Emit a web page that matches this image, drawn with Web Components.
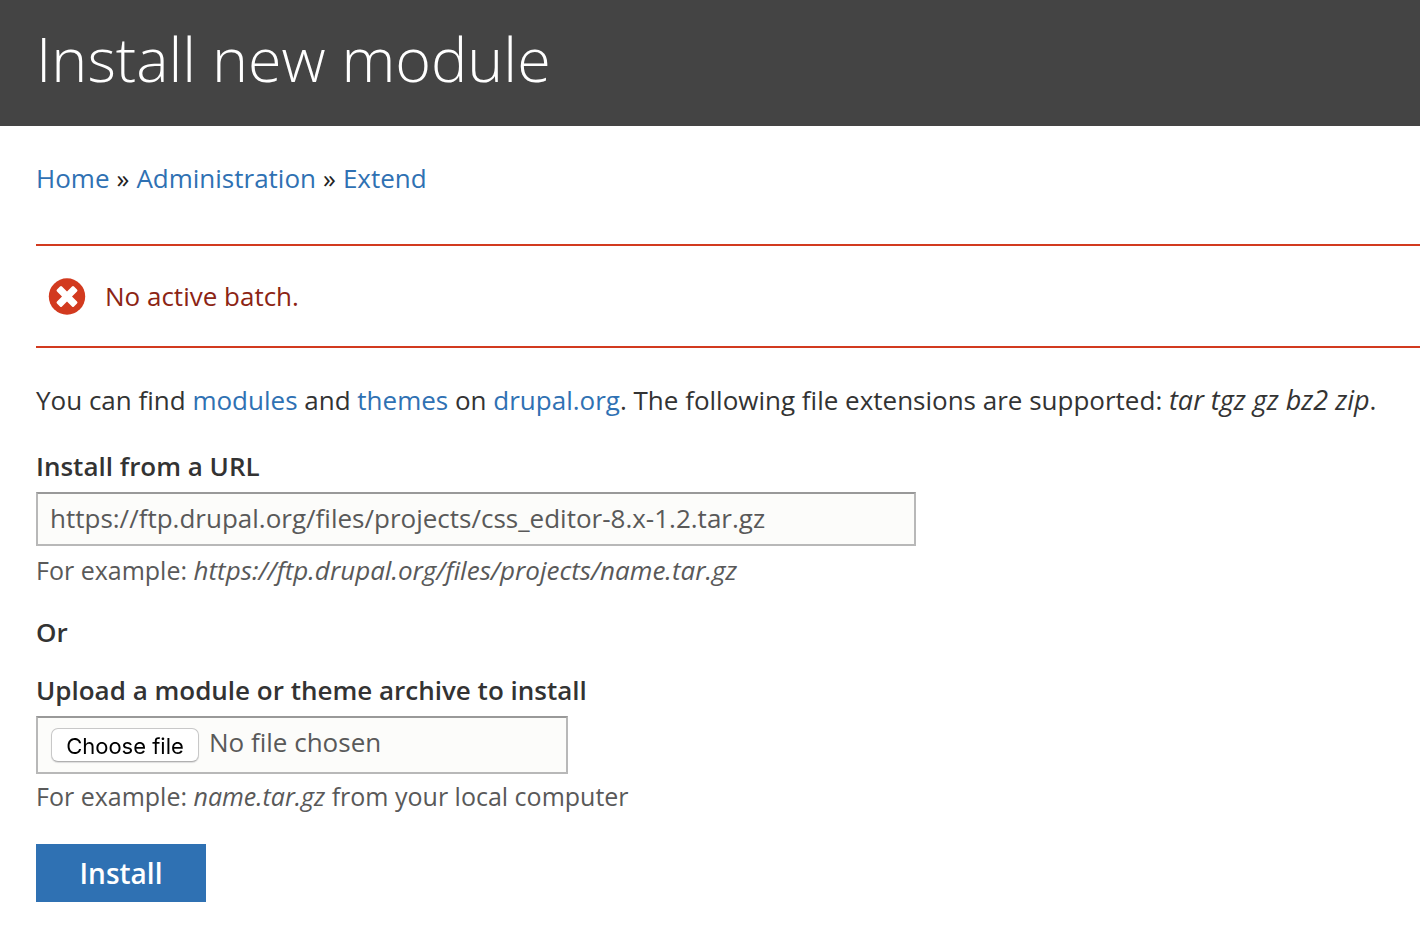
<!DOCTYPE html>
<html lang="en">
<head>
<meta charset="utf-8">
<meta name="viewport" content="width=device-width, initial-scale=1">
<title>Install new module</title>
<style>
  body {
    margin: 0;
    background: #fff;
    color: #333;
    font: 26px/36px "Open Sans", "Noto Sans", sans-serif;
    --link: #2f71b3;
    --muted: #595959;
    --field: #fcfcfa;
    --edge: #b8b8b8;
    --edge-top: #999;
  }
</style>
</head>
<body>
<install-page></install-page>

<script>
const define = (name, html, setup) => {
  const template = document.createElement('template');
  template.innerHTML = html;
  customElements.define(name, class extends HTMLElement {
    constructor() {
      super();
      this.attachShadow({ mode: 'open' }).append(template.content.cloneNode(true));
    }
    connectedCallback() {
      if (setup) setup(this, this.shadowRoot);
    }
  });
};

define('page-header', `
  <style>
    :host { display: block; background: #444; color: #fff; padding: 17px 36px 25px; }
    h1 { margin: 0; font-size: 61px; line-height: 84px; font-weight: 300; }
  </style>
  <header><h1><slot></slot></h1></header>`);

define('bread-crumb', `
  <style>
    :host { display: block; }
    ol { display: flex; flex-wrap: wrap; margin: 0; padding: 0; list-style: none; }
    li + li::before { content: "\\00bb"; margin: 0 7px; color: #222; }
    a { color: var(--link); text-decoration: none; }
  </style>
  <nav aria-label="Breadcrumb"><ol>
    <li><a href="#home">Home</a></li>
    <li><a href="#admin">Administration</a></li>
    <li><a href="#extend">Extend</a></li>
  </ol></nav>`);

define('error-message', `
  <style>
    :host {
      display: flex; align-items: center; gap: 20px;
      padding: 32px 13px;
      border: solid #d23a1f; border-width: 2px 0;
      color: #8c2414;
    }
    svg { width: 36px; height: 36px; flex: none; overflow: visible; }
  </style>
  <svg viewBox="0 0 36 36" aria-hidden="true">
    <circle cx="18" cy="18.500" r="18.200" fill="#d23a1f"/>
    <path d="M8 11.500 L11 8.500 Q12 7.500 13 8.500 L18 13.500 L23 8.500 Q24 7.500 25 8.500 L28 11.500 Q29 12.500 28 13.500 L23 18.500 L28 23.500 Q29 24.500 28 25.500 L25 28.500 Q24 29.500 23 28.500 L18 23.500 L13 28.500 Q12 29.500 11 28.500 L8 25.500 Q7 24.500 8 23.500 L13 18.500 L8 13.500 Q7 12.500 8 11.500 Z" fill="#fff"/>
  </svg>
  <div role="alert"><slot></slot></div>`);

define('url-field', `
  <style>
    :host { display: block; }
    label { display: block; font-weight: 600; margin-bottom: 8px; }
    input {
      display: block; box-sizing: border-box; width: 880px; max-width: 100%;
      margin: 0; padding: 6px 12px 8px; border: 2px solid var(--edge); border-top-color: var(--edge-top);
      border-radius: 0; background: var(--field); color: var(--muted);
      font: inherit; outline: none;
    }
    input:focus { border-color: #40b6ff; }
    p { margin: 6px 0 0; font-size: 25px; color: var(--muted); }
  </style>
  <label for="url">Install from a URL</label>
  <input id="url" type="text" aria-describedby="hint" value="https://ftp.drupal.org/files/projects/css_editor-8.x-1.2.tar.gz">
  <p id="hint"><slot></slot></p>`);

define('upload-field', `
  <style>
    :host { display: block; }
    label { display: block; font-weight: 600; margin-bottom: 8px; }
    .box {
      position: relative; display: flex; align-items: flex-start; gap: 10px;
      box-sizing: border-box; width: 532px; max-width: 100%;
      padding: 6px 13px 12px; border: 2px solid var(--edge); border-top-color: var(--edge-top);
      background: var(--field); color: var(--muted);
    }
    input { position: absolute; inset: 0; width: 100%; height: 100%; margin: 0; opacity: 0; }
    button {
      position: relative; box-sizing: border-box; width: 148px; height: 34px; margin: 4px 0 -2px; padding: 0;
      border: 1px solid #c8c8c8; border-bottom-color: #b0b0b0; border-radius: 7px;
      background: #fff; color: #000; box-shadow: 0 1px 1px #ddd;
      font: 22px/34px Inter, "Liberation Sans", sans-serif; white-space: nowrap;
    }
    p { margin: 4px 0 0; font-size: 25px; color: var(--muted); }
  </style>
  <label for="archive">Upload a module or theme archive to install</label>
  <div class="box">
    <input id="archive" type="file" aria-describedby="hint">
    <button type="button">Choose file</button>
    <span id="name">No file chosen</span>
  </div>
  <p id="hint"><slot></slot></p>`, (host, root) => {
    const input = root.querySelector('input');
    root.querySelector('button').onclick = () => input.click();
    input.onchange = () => {
      root.querySelector('#name').textContent = input.files.length ? input.files[0].name : 'No file chosen';
    };
  });

define('primary-button', `
  <style>
    :host { display: block; }
    button {
      display: block; min-width: 170px; padding: 11px 40px; border: 0;
      background: #2f71b3; color: #fff; font: inherit; font-size: 28px; font-weight: 600; cursor: pointer;
    }
  </style>
  <button type="submit"><slot></slot></button>`);

define('install-page', `
  <style>
    :host { display: block; }
    main { padding: 34px 0 30px 36px; }
    a { color: var(--link); text-decoration: none; }
    em { line-height: 1; }
    error-message { margin-top: 48px; }
    .intro { margin: 34px 36px 30px 0; }
    .intro em { font-size: 27px; }
    h2 { margin: 26px 0 22px; font-size: inherit; font-weight: 600; }
    url-field, upload-field { margin-right: 36px; }
    url-field em { font-size: 26px; }
    primary-button { margin-top: 30px; }
  </style>
  <page-header>Install new module</page-header>
  <main>
    <bread-crumb></bread-crumb>
    <error-message>No active batch.</error-message>
    <p class="intro">You can find <a href="#modules">modules</a> and <a href="#themes">themes</a> on <a href="#drupal">drupal.org</a>. The following file extensions are supported: <em>tar tgz gz bz2 zip</em>.</p>
    <form onsubmit="return false">
      <url-field>For example: <em>https://ftp.drupal.org/files/projects/name.tar.gz</em></url-field>
      <h2>Or</h2>
      <upload-field>For example: <em>name.tar.gz</em> from your local computer</upload-field>
      <primary-button>Install</primary-button>
    </form>
  </main>`);
</script>
</body>
</html>
